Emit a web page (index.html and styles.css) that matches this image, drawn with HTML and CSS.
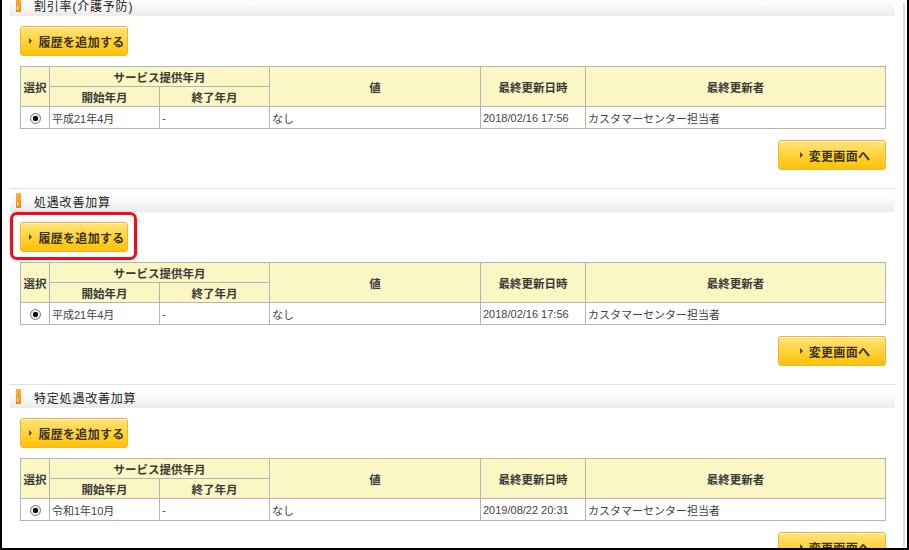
FILE: index.html
```html
<!DOCTYPE html>
<html lang="ja">
<head>
    <meta charset="UTF-8">
    <meta name="viewport" content="width=device-width, initial-scale=1.0">
    <title>加算履歴</title>
    <link rel="stylesheet" href="styles.css">
</head>
<body>
    <div class="frame">
        <div class="content">

            <!-- 割引率 -->
            <div class="section">
                <div class="sec-head"><span class="mark"></span><h3>割引率(介護予防)</h3></div>
                <div class="actions">
                    <span class="btn-wrap"><button class="btn">履歴を追加する</button></span>
                </div>
                <table class="history">
                    <colgroup>
                        <col class="c-sel"><col class="c-ym"><col class="c-ym"><col class="c-val"><col class="c-date"><col>
                    </colgroup>
                    <tr>
                        <th rowspan="2">選択</th>
                        <th colspan="2">サービス提供年月</th>
                        <th rowspan="2">値</th>
                        <th rowspan="2">最終更新日時</th>
                        <th rowspan="2">最終更新者</th>
                    </tr>
                    <tr>
                        <th>開始年月</th>
                        <th>終了年月</th>
                    </tr>
                    <tr>
                        <td class="sel"><span class="radio on"></span></td>
                        <td>平成21年4月</td>
                        <td>-</td>
                        <td>なし</td>
                        <td>2018/02/16 17:56</td>
                        <td>カスタマーセンター担当者</td>
                    </tr>
                </table>
                <div class="footer"><button class="btn">変更画面へ</button></div>
            </div>

            <!-- 処遇改善加算 -->
            <div class="section">
                <div class="sec-head"><span class="mark"></span><h3>処遇改善加算</h3></div>
                <div class="actions">
                    <span class="btn-wrap focus"><button class="btn">履歴を追加する</button></span>
                </div>
                <table class="history">
                    <colgroup>
                        <col class="c-sel"><col class="c-ym"><col class="c-ym"><col class="c-val"><col class="c-date"><col>
                    </colgroup>
                    <tr>
                        <th rowspan="2">選択</th>
                        <th colspan="2">サービス提供年月</th>
                        <th rowspan="2">値</th>
                        <th rowspan="2">最終更新日時</th>
                        <th rowspan="2">最終更新者</th>
                    </tr>
                    <tr>
                        <th>開始年月</th>
                        <th>終了年月</th>
                    </tr>
                    <tr>
                        <td class="sel"><span class="radio on"></span></td>
                        <td>平成21年4月</td>
                        <td>-</td>
                        <td>なし</td>
                        <td>2018/02/16 17:56</td>
                        <td>カスタマーセンター担当者</td>
                    </tr>
                </table>
                <div class="footer"><button class="btn">変更画面へ</button></div>
            </div>

            <!-- 特定処遇改善加算 -->
            <div class="section">
                <div class="sec-head"><span class="mark"></span><h3>特定処遇改善加算</h3></div>
                <div class="actions">
                    <span class="btn-wrap"><button class="btn">履歴を追加する</button></span>
                </div>
                <table class="history">
                    <colgroup>
                        <col class="c-sel"><col class="c-ym"><col class="c-ym"><col class="c-val"><col class="c-date"><col>
                    </colgroup>
                    <tr>
                        <th rowspan="2">選択</th>
                        <th colspan="2">サービス提供年月</th>
                        <th rowspan="2">値</th>
                        <th rowspan="2">最終更新日時</th>
                        <th rowspan="2">最終更新者</th>
                    </tr>
                    <tr>
                        <th>開始年月</th>
                        <th>終了年月</th>
                    </tr>
                    <tr>
                        <td class="sel"><span class="radio on"></span></td>
                        <td>令和1年10月</td>
                        <td>-</td>
                        <td>なし</td>
                        <td>2019/08/22 20:31</td>
                        <td>カスタマーセンター担当者</td>
                    </tr>
                </table>
                <div class="footer"><button class="btn">変更画面へ</button></div>
            </div>

        </div>
        <div class="rail"></div>
    </div>
</body>
</html>
```

FILE: styles.css
```css
html, body {
    margin: 0;
    padding: 0;
    background: #fff;
}
body {
    font-family: "Liberation Sans", "Noto Sans CJK JP", sans-serif;
    color: #333;
}
.frame {
    width: 909px;
    height: 550px;
    box-sizing: border-box;
    border-left: 2px solid #000;
    border-right: 2px solid #000;
    border-bottom: 2px solid #000;
    display: flex;
    overflow: hidden;
    padding-right: 2px;
}
.content {
    flex: 1;
    margin-top: -8px; /* 上端のセクションは見出しが途中から表示 */
}
.rail {
    width: 2px;
    margin-top: 3px;
    background: #dcdcdc;
}

/* セクション */
.section {
    margin: 0 8px 18px 8px;
}
.sec-head {
    height: 23px;
    border-top: 1px solid #e4e1dc;
    background: linear-gradient(#fff 0%, #fbfbfb 45%, #ebebeb 100%);
    display: flex;
    align-items: center;
    position: relative;
}
.mark {
    width: 5px;
    height: 15px;
    margin-left: 6px;
    background: linear-gradient(#ffb347, #f08a00);
    position: relative;
}
.mark::after {
    content: "";
    position: absolute;
    left: 1px;
    bottom: 2px;
    border-left: 2px solid #fff;
    border-top: 2px solid transparent;
    border-bottom: 2px solid transparent;
}
.sec-head h3 {
    margin: 1px 0 0 13px;
    font-size: 12px;
    font-weight: normal;
    letter-spacing: 0.8px;
    color: #222;
}

/* ボタン */
.actions {
    padding: 10px 0 0 10px;
    height: 30px;
}
.btn-wrap {
    display: inline-block;
    position: relative;
}
.btn-wrap.focus::after {
    content: "";
    position: absolute;
    left: -10px;
    top: -10px;
    right: -9px;
    bottom: -8px;
    border: 3px solid #e8101c;
    border-radius: 7px;
    box-shadow: 0 0 2px rgba(200, 0, 0, 0.4);
}
.btn {
    width: 108px;
    height: 30px;
    padding: 0 0 0 6px;
    border: 1px solid #eab73c;
    border-radius: 3px;
    background: linear-gradient(#ffe47e 0%, #ffd33a 50%, #ffc106 100%);
    box-shadow: inset 0 1px 0 rgba(255, 255, 255, 0.6);
    font-family: "Noto Sans CJK JP", sans-serif;
    font-size: 12px;
    font-weight: bold;
    letter-spacing: 0.3px;
    color: #3b3320;
    cursor: pointer;
    display: inline-flex;
    align-items: center;
    justify-content: center;
    gap: 6px;
}
.btn::before {
    content: "";
    border-left: 3px solid #5a4a20;
    border-top: 3px solid transparent;
    border-bottom: 3px solid transparent;
}
.btn:hover {
    background: linear-gradient(#ffeca0, #ffcc33);
}

/* 履歴テーブル */
.history {
    margin: 10px 9px 0 10px;
    width: 866px;
    border-collapse: collapse;
    table-layout: fixed;
    font-size: 11px;
}
.c-sel { width: 29px; }
.c-ym { width: 110px; }
.c-val { width: 211px; }
.c-date { width: 105px; }
.history th, .history td {
    border: 1px solid #b4b4b4;
    padding: 0 2px;
    white-space: nowrap;
    overflow: hidden;
}
.history th {
    background: #fbf7c4;
    font-family: "Noto Sans CJK JP", sans-serif;
    font-size: 11.5px;
    font-weight: bold;
    color: #3a3a3a;
    height: 19px;
    text-align: center;
}
.history td {
    height: 21px;
    color: #444;
    text-align: left;
}
.history td.sel {
    text-align: center;
    padding: 0;
}
.radio {
    display: inline-block;
    width: 11px;
    height: 11px;
    box-sizing: border-box;
    border: 1px solid #7a7a7a;
    border-radius: 50%;
    background: radial-gradient(circle, #111 0 2.5px, #f4f4f4 3px, #dcdcdc 100%);
    vertical-align: middle;
}

.footer {
    display: flex;
    justify-content: flex-end;
    padding: 11px 9px 0 0;
    height: 30px;
}
```
